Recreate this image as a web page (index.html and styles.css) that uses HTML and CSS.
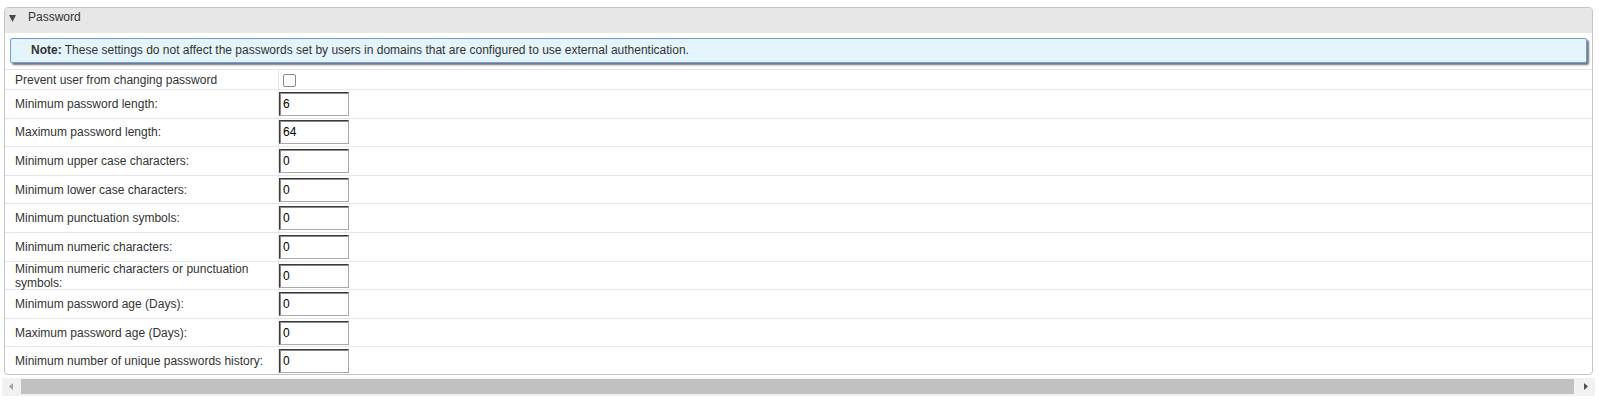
FILE: index.html
```html
<!DOCTYPE html>
<html>
<head>
<meta charset="utf-8">
<title>Password settings</title>
<link rel="stylesheet" href="styles.css">
</head>
<body>
<div class="page">
  <div class="panel">
    <div class="panel-head">
      <svg class="caret" width="7" height="7" viewBox="0 0 7 7"><path d="M0 0 H7 L3.5 7 Z" fill="#4a4a4a"/></svg>
      <span class="title">Password</span>
    </div>
    <div class="note-wrap">
      <div class="note"><b>Note:</b> These settings do not affect the passwords set by users in domains that are configured to use external authentication.</div>
    </div>
    <div class="rows">
      <div class="row row-first">
        <div class="label">Prevent user from changing password</div>
        <div class="value"><input type="checkbox" class="check"></div>
      </div>
      <div class="row">
        <div class="label">Minimum password length:</div>
        <div class="value"><input type="text" class="field" value="6"></div>
      </div>
      <div class="row">
        <div class="label">Maximum password length:</div>
        <div class="value"><input type="text" class="field" value="64"></div>
      </div>
      <div class="row">
        <div class="label">Minimum upper case characters:</div>
        <div class="value"><input type="text" class="field" value="0"></div>
      </div>
      <div class="row">
        <div class="label">Minimum lower case characters:</div>
        <div class="value"><input type="text" class="field" value="0"></div>
      </div>
      <div class="row">
        <div class="label">Minimum punctuation symbols:</div>
        <div class="value"><input type="text" class="field" value="0"></div>
      </div>
      <div class="row">
        <div class="label">Minimum numeric characters:</div>
        <div class="value"><input type="text" class="field" value="0"></div>
      </div>
      <div class="row">
        <div class="label">Minimum numeric characters or punctuation symbols:</div>
        <div class="value"><input type="text" class="field" value="0"></div>
      </div>
      <div class="row">
        <div class="label">Minimum password age (Days):</div>
        <div class="value"><input type="text" class="field" value="0"></div>
      </div>
      <div class="row">
        <div class="label">Maximum password age (Days):</div>
        <div class="value"><input type="text" class="field" value="0"></div>
      </div>
      <div class="row row-last">
        <div class="label">Minimum number of unique passwords history:</div>
        <div class="value"><input type="text" class="field" value="0"></div>
      </div>
    </div>
  </div>
  <div class="hscroll">
    <svg class="arrow" width="4" height="7" viewBox="0 0 4 7"><path d="M4 0 V7 L0 3.5 Z" fill="#a3a3a3"/></svg>
    <div class="thumb"></div>
    <svg class="arrow" width="4" height="7" viewBox="0 0 4 7"><path d="M0 0 V7 L4 3.5 Z" fill="#505050"/></svg>
  </div>
</div>
</body>
</html>
```
FILE: styles.css
```css
html, body {
  margin: 0;
  padding: 0;
  background: #ffffff;
}
body {
  font-family: "Liberation Sans", Arial, sans-serif;
  font-size: 12px;
  color: #333333;
}
.page {
  padding-top: 7px;
  width: 1595px;
}
.panel {
  margin-left: 4px;
  width: 1587px;
  border: 1px solid #c4c4c4;
  border-radius: 4px;
  overflow: hidden;
}
.panel-head {
  height: 23px;
  padding-top: 2px;
  background: #e7e7e7;
  display: flex;
  align-items: flex-start;
  line-height: 14px;
}
.caret {
  margin: 5px 0 0 4px;
}
.title {
  margin-left: 12px;
  color: #333333;
}
.note-wrap {
  padding: 5px 5px 5px 5px;
  height: 26px;
}
.note {
  height: 23px;
  line-height: 23px;
  border: 1px solid #6e9ce6;
  border-radius: 2px;
  background: #e4f4fd;
  padding-left: 20px;
  box-shadow: 2px 2px 2px rgba(0, 0, 0, 0.55);
  white-space: nowrap;
}
.note b {
  font-weight: bold;
}
.rows {
  border-top: 1px solid #e6e6e6;
  display: flex;
  flex-direction: column;
}
.row {
  display: grid;
  grid-template-columns: 274px 1fr;
  height: 27.6px;
  border-bottom: 1px solid #e6e6e6;
}
.row-first {
  height: 19px;
}
.row-last {
  height: 26.6px;
  border-bottom: none;
}
.label {
  display: flex;
  align-items: center;
  padding-left: 10px;
  padding-right: 4px;
  border-right: 1px solid #e6e6e6;
  line-height: 14px;
}
.value {
  display: flex;
  align-items: center;
}
.check {
  width: 13px;
  height: 13px;
  margin: 1px 0 0 4px;
  appearance: none;
  -webkit-appearance: none;
  border: 1px solid #8a8a8a;
  border-radius: 2px;
  background: #ffffff;
}
.field {
  box-sizing: border-box;
  width: 70px;
  height: 24px;
  margin: 0;
  padding: 0 3px;
  font-family: "Liberation Sans", Arial, sans-serif;
  font-size: 12px;
  color: #000000;
  background: #ffffff;
  border-style: solid;
  border-width: 1px;
  border-color: #3a3a3a #a9a9a9 #a9a9a9 #3a3a3a;
  box-shadow: inset 1px 1px 0 #8a8a8a;
  outline: none;
}
.hscroll {
  margin: 3px 0 0 2px;
  height: 18px;
  background: #f1f1f1;
  display: flex;
  align-items: center;
}
.hscroll .arrow:first-child {
  margin: 0 8px 0 7px;
}
.hscroll .arrow:last-child {
  margin: 0 7px 0 10px;
}
.thumb {
  flex: 1;
  height: 15px;
  background: #c1c1c1;
}
```
